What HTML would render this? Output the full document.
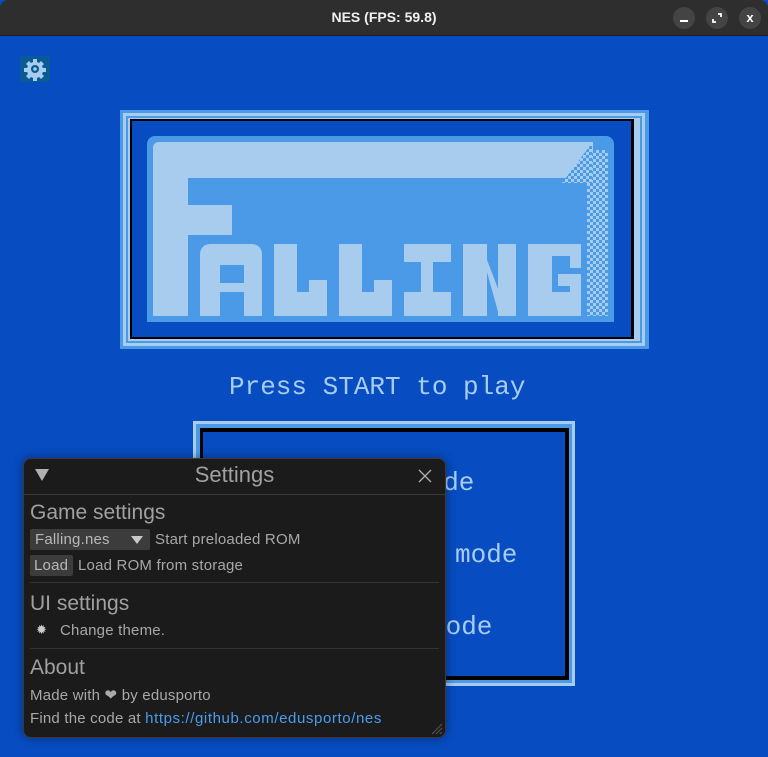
<!DOCTYPE html>
<html><head><meta charset="utf-8"><style>
*{margin:0;padding:0;box-sizing:border-box}
body{width:768px;height:757px;overflow:hidden;background:#074cc0;position:relative;font-family:"Liberation Sans",sans-serif}
.a{position:absolute}
.L{background:#a7ccee}
.M{background:#4b9ae8}
.D{background:#074cc0}
.K{background:#000}
.px{font-family:"Liberation Mono",monospace;color:#a7ccee}
.ui{color:#a8a8a8;font-size:15px;letter-spacing:0.2px;white-space:nowrap}
.h{color:#a0a0a0;font-size:21px;white-space:nowrap}
</style></head><body>
<div class="a" style="left:0;top:0;width:768px;height:36px;background:#2e2e2e;border-radius:8px 8px 0 0;border-bottom:1px solid #1e1e1e"></div>
<div class="a" style="left:0;top:9px;width:768px;text-align:center;color:#f0f0f0;font-weight:bold;font-size:14px">NES (FPS: 59.8)</div>
<div class="a" style="left:673px;top:7px;width:22px;height:22px;border-radius:11px;background:#444"></div>
<div class="a" style="left:680px;top:20px;width:8px;height:2px;background:#fff"></div>
<div class="a" style="left:706px;top:7px;width:22px;height:22px;border-radius:11px;background:#444"></div>
<svg class="a" style="left:711px;top:12px" width="12" height="12"><path d="M7 2h3v3M5 10H2V7" stroke="#fff" stroke-width="1.8" fill="none"/></svg>
<div class="a" style="left:739px;top:7px;width:22px;height:22px;border-radius:11px;background:#444;color:#fff;font-size:13px;font-weight:bold;text-align:center;line-height:22px">x</div>
<div class="a" style="left:20px;top:56px;width:30px;height:26px;background:#0a5a96;border-radius:2px"></div>
<svg class="a" style="left:23px;top:57px" width="24" height="24" viewBox="0 0 24 24"><path fill="#a7ccee" d="M10 2h4v3l2 1 2-2 3 3-2 2 1 2h3v4h-3l-1 2 2 2-3 3-2-2-2 1v3h-4v-3l-2-1-2 2-3-3 2-2-1-2H1v-4h3l1-2-2-2 3-3 2 2 2-1z"/><circle cx="12" cy="12" r="4" fill="#0a5a96"/><circle cx="12" cy="12" r="1.8" fill="#a7ccee"/></svg>
<div class="a M" style="left:120px;top:110px;width:529px;height:239px"></div>
<div class="a L" style="left:123px;top:113px;width:522px;height:233px"></div>
<div class="a M" style="left:126px;top:116px;width:516px;height:227px"></div>
<div class="a L" style="left:128px;top:118px;width:512px;height:223px"></div>
<div class="a K" style="left:130px;top:119px;width:504px;height:220px"></div>
<div class="a D" style="left:132px;top:121px;width:499px;height:216px"></div>
<div class="a M" style="left:147px;top:136px;width:467px;height:186px;border-radius:8px 8px 0 0"></div>
<div class="a L" style="left:153px;top:142px;width:440px;height:36px;border-radius:6px 0 0 0"></div>
<div class="a L" style="left:153px;top:142px;width:35px;height:174px;border-radius:6px 0 0 0"></div>
<div class="a L" style="left:188px;top:205px;width:44px;height:30px"></div>
<div class="a" style="left:587px;top:150px;width:21px;height:166px;background:repeating-conic-gradient(#a7ccee 0 25%,#4b9ae8 0 50%) 0 0/6px 6px"></div>
<div class="a" style="left:562px;top:143px;width:30px;height:40px;background:repeating-conic-gradient(#a7ccee 0 25%,#4b9ae8 0 50%) 0 0/6px 6px;clip-path:polygon(100% 0,100% 100%,0 100%)"></div>
<div class="a L" style="left:200px;top:244px;width:62px;height:72px;border-radius:10px 10px 0 0"></div>
<div class="a M" style="left:220px;top:265px;width:24px;height:18px"></div>
<div class="a M" style="left:220px;top:292px;width:24px;height:24px"></div>
<div class="a L" style="left:274px;top:244px;width:23px;height:72px"></div>
<div class="a L" style="left:274px;top:292px;width:53px;height:24px"></div>
<div class="a L" style="left:309px;top:280px;width:18px;height:36px"></div>
<div class="a L" style="left:339px;top:244px;width:23px;height:72px"></div>
<div class="a L" style="left:339px;top:292px;width:53px;height:24px"></div>
<div class="a L" style="left:374px;top:280px;width:18px;height:36px"></div>
<div class="a L" style="left:404px;top:244px;width:47px;height:18px"></div>
<div class="a L" style="left:421px;top:244px;width:12px;height:72px"></div>
<div class="a L" style="left:404px;top:292px;width:47px;height:24px"></div>
<div class="a L" style="left:463px;top:244px;width:53px;height:72px"></div>
<div class="a M" style="left:487px;top:244px;width:11px;height:72px;clip-path:polygon(0 0,100% 0,100% 62%,0 22%)"></div>
<div class="a M" style="left:487px;top:272px;width:11px;height:44px;clip-path:polygon(0 0,100% 90%,100% 100%,0 100%)"></div>
<div class="a L" style="left:528px;top:244px;width:53px;height:72px"></div>
<div class="a M" style="left:552px;top:256px;width:18px;height:36px"></div>
<div class="a L" style="left:558px;top:274px;width:23px;height:12px"></div>
<div class="a M" style="left:570px;top:268px;width:11px;height:6px"></div>
<div class="a px" style="left:229px;top:372px;font-size:26px;white-space:nowrap">Press START to play</div>
<div class="a L" style="left:193px;top:421px;width:382px;height:265px"></div>
<div class="a M" style="left:196px;top:424px;width:376px;height:259px"></div>
<div class="a K" style="left:200px;top:428px;width:369px;height:252px"></div>
<div class="a D" style="left:203px;top:432px;width:362px;height:244px"></div>
<div class="a px" style="left:412px;top:468px;font-size:26px">mode</div>
<div class="a px" style="left:455px;top:540px;font-size:26px">mode</div>
<div class="a px" style="left:430px;top:612px;font-size:26px">mode</div>
<div class="a" style="left:23px;top:458px;width:423px;height:280px;background:#1b1b1b;border:1px solid #3a3a3a;border-radius:8px;box-shadow:0 0 10px rgba(0,0,0,.4)"></div>
<div class="a" style="left:24px;top:494px;width:421px;height:1px;background:#3a3a3a"></div>
<div class="a" style="left:35px;top:469px;width:0;height:0;border-left:7px solid transparent;border-right:7px solid transparent;border-top:12px solid #b0b0b0"></div>
<div class="a h" style="left:24px;top:462px;width:421px;text-align:center;font-size:22px">Settings</div>
<svg class="a" style="left:418px;top:469px" width="14" height="14"><path d="M1 1L13 13M13 1L1 13" stroke="#b0b0b0" stroke-width="1.3"/></svg>
<div class="a h" style="left:30px;top:501px">Game settings</div>
<div class="a" style="left:30px;top:529px;width:120px;height:21px;background:#3c3c3c;border-radius:2px"></div>
<div class="a ui" style="left:35px;top:531px;color:#b8b8b8">Falling.nes</div>
<div class="a" style="left:131px;top:536px;width:0;height:0;border-left:6px solid transparent;border-right:6px solid transparent;border-top:8px solid #c8c8c8"></div>
<div class="a ui" style="left:155px;top:531px">Start preloaded ROM</div>
<div class="a" style="left:30px;top:555px;width:43px;height:21px;background:#3c3c3c;border-radius:2px"></div>
<div class="a ui" style="left:34px;top:557px;color:#b8b8b8">Load</div>
<div class="a ui" style="left:78px;top:557px">Load ROM from storage</div>
<div class="a" style="left:30px;top:582px;width:409px;height:1px;background:#333"></div>
<div class="a h" style="left:30px;top:592px">UI settings</div>
<div class="a ui" style="left:36px;top:622px;color:#ccc;font-size:13px">✹</div>
<div class="a ui" style="left:60px;top:622px">Change theme.</div>
<div class="a" style="left:30px;top:648px;width:409px;height:1px;background:#333"></div>
<div class="a h" style="left:30px;top:656px">About</div>
<div class="a ui" style="left:30px;top:686px">Made with <span style="color:#aaa">❤</span> by edusporto</div>
<div class="a ui" style="left:30px;top:710px">Find the code at <span style="color:#4a9cee;letter-spacing:0.6px">https://github.com/edusporto/nes</span></div>
<svg class="a" style="left:430px;top:722px" width="13" height="13"><path d="M12 2L2 12M12 6L6 12M12 10L10 12" stroke="#555" stroke-width="1"/></svg>
</body></html>
